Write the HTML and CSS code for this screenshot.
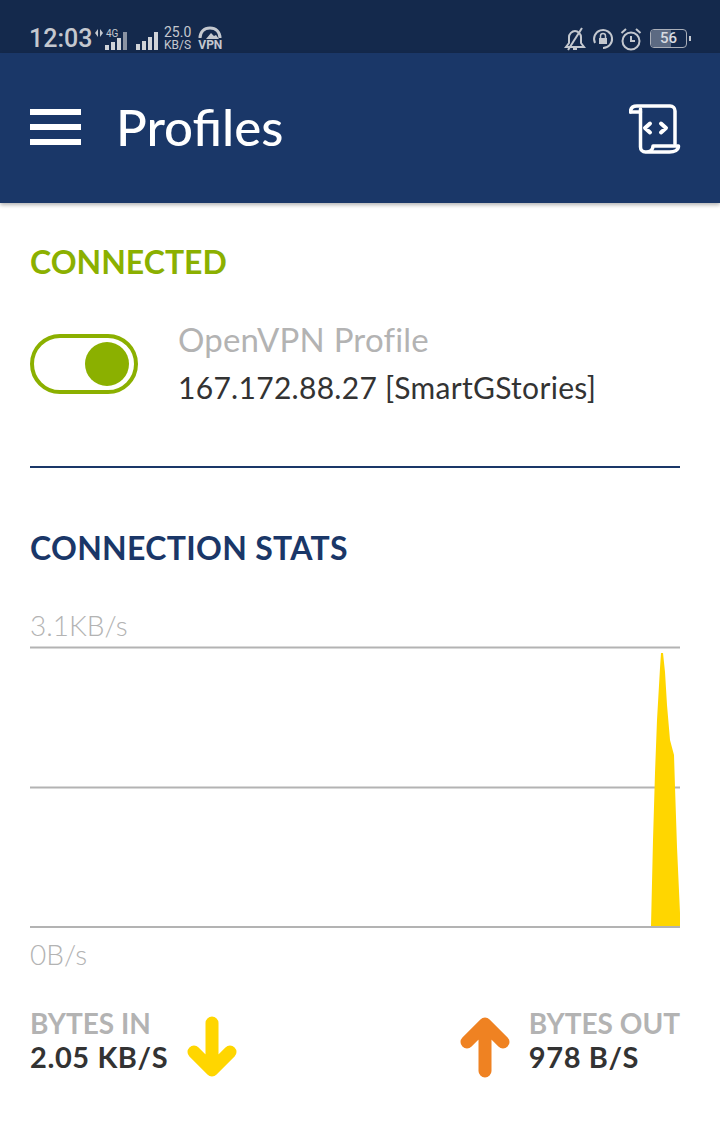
FILE: index.html
```html
<!DOCTYPE html>
<html lang="en">
<head>
  <meta charset="UTF-8" />
  <meta name="viewport" content="width=device-width, initial-scale=1.0" />
  <title>Profiles</title>
  <link rel="stylesheet" href="styles.css">
</head>
<body>
  <div class="status-bar">
    <div class="status-left">
      <span class="clock">12:03</span>
      <svg class="net-icon" width="36" height="24" viewBox="0 0 36 24">
        <path d="M3 2L0 6l3 4zM5 2l3 4-3 4z" fill="#c4c8cf"/>
        <text x="11" y="10" class="tiny">4G</text>
        <g fill="#d0d3d8">
          <rect x="10" y="18" width="4" height="5"/>
          <rect x="16" y="15" width="4" height="8"/>
          <rect x="22" y="11" width="4" height="12"/>
        </g>
        <rect x="28" y="5" width="4" height="18" fill="#8a93a3"/>
      </svg>
      <svg class="signal-icon" width="24" height="20" viewBox="0 0 24 20">
        <g fill="#d0d3d8">
          <rect x="1" y="13" width="4" height="6"/>
          <rect x="7" y="10" width="4" height="9"/>
          <rect x="13" y="6" width="4" height="13"/>
          <rect x="19" y="1" width="4" height="18"/>
        </g>
      </svg>
      <div class="speed"><span>25.0</span><span>KB/S</span></div>
      <div class="vpn">
        <svg width="24" height="14" viewBox="0 0 24 14">
          <path d="M2 12C2 6 6 2 12 2s10 4 10 10" fill="none" stroke="#c4c8cf" stroke-width="3"/>
          <path d="M8 13l5-6 3 3 2-1 3 4z" fill="#c4c8cf"/>
        </svg>
        <span>VPN</span>
      </div>
    </div>
    <div class="status-right">
      <svg width="22" height="24" viewBox="0 0 22 24" fill="none" stroke="#c4c8cf" stroke-width="2">
        <path d="M2 20h18l-3-4V10c0-3-3-6-6-6s-6 3-6 6v6z"/>
        <path d="M9 22h4"/>
        <path d="M18 1L4 23"/>
      </svg>
      <svg width="22" height="22" viewBox="0 0 22 22" fill="none" stroke="#c4c8cf" stroke-width="2">
        <path d="M3 15A9 9 0 1 1 11 20"/>
        <rect x="7" y="10" width="8" height="6" fill="#c4c8cf" stroke="none"/>
        <path d="M8.500 10V8a2.500 2.500 0 0 1 5 0v2" stroke-width="1.500"/>
      </svg>
      <svg width="22" height="24" viewBox="0 0 22 24" fill="none" stroke="#c4c8cf" stroke-width="2">
        <circle cx="11" cy="14" r="8.500"/>
        <path d="M11 9v5h4"/>
        <path d="M1.500 6L6 2M20.500 6L16 2"/>
      </svg>
      <div class="battery"><span class="battery-fill"></span><span class="battery-num">56</span></div>
      <span class="battery-tip"></span>
    </div>
  </div>

  <header class="app-bar">
    <div class="app-bar-left">
      <div class="menu-icon"><span></span><span></span><span></span></div>
      <h1>Profiles</h1>
    </div>
    <svg class="script-icon" width="52" height="50" viewBox="0 0 52 50" fill="none" stroke="#fff" stroke-width="3.500" stroke-linejoin="round" stroke-linecap="round">
      <path d="M1.500 8C1.500 4 4 2 8 2h33c3 0 5 2 5 5v33"/>
      <path d="M1.500 8h10"/>
      <path d="M11.500 5v38c0 3 2 5 5 5h24c5 0 9-2 9-6H24c0 3-2 6-7 6"/>
      <path d="M21 19.500l-5 4.500 5 4.500M32 19.500l5 4.500-5 4.500" stroke-width="4"/>
    </svg>
  </header>

  <main class="content">
    <h2 class="status-title">CONNECTED</h2>
    <div class="profile-row">
      <div class="toggle"><span class="knob"></span></div>
      <div class="profile-text">
        <div class="profile-name">OpenVPN Profile</div>
        <div class="profile-server">167.172.88.27 [SmartGStories]</div>
      </div>
    </div>
    <hr class="divider">

    <h2 class="stats-title">CONNECTION STATS</h2>
    <div class="axis-label axis-top">3.1KB/s</div>
    <svg class="chart" width="650" height="282" viewBox="30 646 650 282">
      <path d="M30 647.500H680M30 787.500H680M30 927H680" stroke="#b3b3b3" stroke-width="2" fill="none"/>
      <polygon fill="#ffd600" points="651,926 653,840 655,773 657,720 660,668 661,653 663,653 665,672 667,705 670,740 674,755 675,787 677,847 680,913 680,926"/>
    </svg>
    <div class="axis-label axis-bottom">0B/s</div>

    <div class="bytes-row">
      <div class="bytes-group">
        <div class="bytes-text">
          <div class="bytes-label">BYTES IN</div>
          <div class="bytes-value">2.05 KB/S</div>
        </div>
        <svg class="arrow" width="50" height="62" viewBox="0 0 50 62" fill="none" stroke="#ffd600" stroke-width="13" stroke-linecap="round" stroke-linejoin="round">
          <path d="M25 7v46M7 36l18 18 18-18"/>
        </svg>
      </div>
      <div class="bytes-group">
        <svg class="arrow" width="50" height="62" viewBox="0 0 50 62" fill="none" stroke="#ef8222" stroke-width="13" stroke-linecap="round" stroke-linejoin="round">
          <path d="M25 55V9M7 26L25 8l18 18"/>
        </svg>
        <div class="bytes-text">
          <div class="bytes-label">BYTES OUT</div>
          <div class="bytes-value">978 B/S</div>
        </div>
      </div>
    </div>
  </main>
</body>
</html>
```

FILE: styles.css
```css
* {
  box-sizing: border-box;
}
body {
  margin: 0;
  width: 720px;
  height: 1128px;
  overflow: hidden;
  background: #fff;
  font-family: 'Lato', 'Open Sans', sans-serif;
  color: #333;
}
.status-bar {
  height: 53px;
  padding: 24px 29px 0 29px;
  background: #14294c;
  display: flex;
  justify-content: space-between;
  align-items: center;
  color: #c4c8cf;
  font-family: 'Roboto', sans-serif;
}
.status-left, .status-right {
  display: flex;
  align-items: center;
}
.clock {
  font-size: 25px;
  font-weight: 500;
  width: 64px;
}
.net-icon {
  margin-left: 2px;
}
.tiny {
  font-size: 10px;
  fill: #c4c8cf;
}
.signal-icon {
  margin-left: 4px;
  margin-top: 4px;
}
.speed {
  display: flex;
  flex-direction: column;
  margin-left: 5px;
  font-size: 12px;
  line-height: 12px;
}
.speed span:first-child {
  font-size: 14px;
  line-height: 13px;
}
.vpn {
  display: flex;
  flex-direction: column;
  align-items: center;
  margin-left: 7px;
  font-size: 12px;
  font-weight: 700;
  line-height: 11px;
}
.status-right svg {
  margin-right: 6px;
}
.battery {
  position: relative;
  width: 37px;
  height: 19px;
  margin-left: 2px;
  border: 1px solid #a9aeb8;
  border-radius: 4px;
  overflow: hidden;
  text-align: center;
  font-size: 15px;
  font-weight: 500;
  line-height: 17px;
}
.battery-fill {
  position: absolute;
  left: 0;
  top: 0;
  bottom: 0;
  width: 56%;
  background: #5c6a82;
}
.battery-num {
  position: relative;
  color: #d8dbe0;
}
.battery-tip {
  width: 2px;
  height: 5px;
  margin-left: 2px;
  background: #c4c8cf;
}
.app-bar {
  height: 150px;
  padding: 0 40px 4px 30px;
  background: #1a3768;
  display: flex;
  justify-content: space-between;
  align-items: center;
  box-shadow: 0 2px 4px rgba(0,0,0,0.3);
}
.app-bar-left {
  display: flex;
  align-items: center;
  gap: 35px;
}
.menu-icon {
  width: 51px;
  margin-top: 2px;
  display: flex;
  flex-direction: column;
  gap: 9px;
}
.menu-icon span {
  height: 6px;
  background: #fff;
}
.app-bar h1 {
  margin: 0;
  color: #fff;
  font-size: 51px;
  font-weight: 500;
}
.script-icon {
  margin-right: -1px;
  margin-top: 5px;
}
.content {
  padding: 40px 40px 0 30px;
}
.status-title {
  margin: 0;
  color: #8bb000;
  font-size: 32px;
  line-height: 37px;
  font-weight: 700;
}
.profile-row {
  display: flex;
  align-items: center;
  gap: 40px;
  margin-top: 38px;
}
.toggle {
  width: 108px;
  height: 60px;
  border: 4px solid #8bb000;
  border-radius: 30px;
  display: flex;
  justify-content: flex-end;
  align-items: center;
  padding-right: 5px;
}
.knob {
  width: 44px;
  height: 44px;
  border-radius: 50%;
  background: #8bb000;
}
.profile-name {
  color: #b3b3b3;
  font-size: 33px;
  letter-spacing: 0.2px;
  line-height: 42px;
}
.profile-server {
  margin-top: 4px;
  color: #333;
  font-size: 30px;
  letter-spacing: 0.3px;
  line-height: 46px;
}
.divider {
  margin: 56px 0 0;
  border: 0;
  border-top: 2px solid #1a3768;
}
.stats-title {
  margin: 61px 0 0;
  color: #1a3768;
  font-size: 32px;
  letter-spacing: 0.3px;
  line-height: 37px;
  font-weight: 700;
}
.axis-label {
  color: #b3b3b3;
  font-size: 28px;
  font-weight: 300;
  line-height: 32px;
}
.axis-top {
  margin-top: 43px;
}
.chart {
  display: block;
  margin-top: 5px;
}
.axis-bottom {
  margin-top: 10px;
}
.bytes-row {
  display: flex;
  justify-content: space-between;
  margin-top: 32px;
}
.bytes-group {
  display: flex;
  align-items: center;
  gap: 19px;
}
.arrow {
  margin-top: 14px;
}
.bytes-label {
  color: #b3b3b3;
  font-size: 28px;
  line-height: 34px;
  font-weight: 700;
}
.bytes-value {
  color: #333;
  font-size: 29px;
  letter-spacing: 0.6px;
  line-height: 34px;
  font-weight: 700;
}
```
